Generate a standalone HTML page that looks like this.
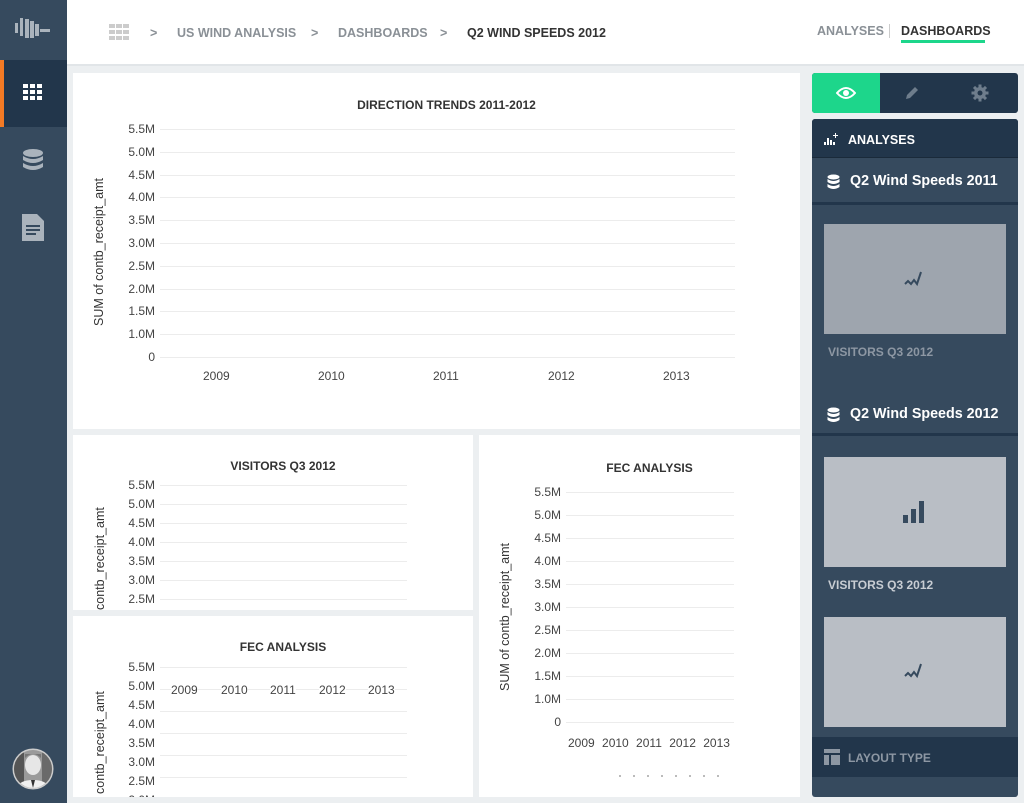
<!DOCTYPE html>
<html><head><meta charset="utf-8"><style>
*{margin:0;padding:0;box-sizing:border-box}
body{width:1024px;height:803px;overflow:hidden;background:#eceff1;font-family:"Liberation Sans",sans-serif;position:relative}
.a{position:absolute}
.side{left:0;top:0;width:67px;height:803px;background:#364a5e}
.hdr{left:67px;top:0;width:957px;height:66px;background:#fff;border-bottom:2px solid #e1e5e8}
.bc{font-size:12.5px;font-weight:bold;color:#8a9096;top:26px}
.card{background:#fff}
.t{font-size:12px;font-weight:bold;color:#333;text-align:center}
.yl{font-size:12px;color:#444;text-align:right;width:40px}
.g{height:1px;background:#ececec}
.xl{font-size:12px;color:#444}
.rot{font-size:12.5px;color:#333;transform:rotate(-90deg);transform-origin:left top;white-space:nowrap}
.rp{color:#fff;font-weight:bold}
</style></head><body>
<div class="a side"></div>
<svg class="a" style="left:14px;top:16px" width="38" height="24" viewBox="0 0 38 24" fill="#aab3bc"><rect x="1" y="7" width="3" height="10"/><rect x="6" y="2" width="3" height="18"/><rect x="11" y="3" width="4" height="19"/><rect x="16" y="5" width="4" height="17"/><rect x="21" y="8" width="4" height="12"/><rect x="26" y="13" width="10" height="3"/></svg>
<div class="a" style="left:0;top:60px;width:67px;height:67px;background:#22364b"></div>
<div class="a" style="left:0;top:60px;width:4px;height:67px;background:#f37a25"></div>
<svg class="a" style="left:23px;top:84px" width="20" height="16" fill="#fff"><rect x="0" y="0" width="5" height="4"/><rect x="7" y="0" width="5" height="4"/><rect x="14" y="0" width="5" height="4"/><rect x="0" y="6" width="5" height="4"/><rect x="7" y="6" width="5" height="4"/><rect x="14" y="6" width="5" height="4"/><rect x="0" y="12" width="5" height="4"/><rect x="7" y="12" width="5" height="4"/><rect x="14" y="12" width="5" height="4"/></svg>
<svg class="a" style="left:22px;top:149px" width="22" height="24" fill="#aab3bc"><ellipse cx="11" cy="4" rx="10" ry="4"/><path d="M1 7q10 6 20 0v4q-10 6-20 0z"/><path d="M1 14q10 6 20 0v4q-10 6-20 0z"/></svg>
<svg class="a" style="left:22px;top:214px" width="22" height="27"><path d="M0 0h15l7 7v20h-22z" fill="#aab3bc"/><rect x="4" y="11" width="14" height="2" fill="#364a5e"/><rect x="4" y="15" width="14" height="2" fill="#364a5e"/><rect x="4" y="19" width="10" height="2" fill="#364a5e"/></svg>
<svg class="a" style="left:12px;top:748px" width="42" height="42"><defs><clipPath id="c"><circle cx="21" cy="21" r="19"/></clipPath></defs><circle cx="21" cy="21" r="20.5" fill="#ccc"/><g clip-path="url(#c)"><rect width="42" height="42" fill="#9a9a9a"/><rect x="0" y="0" width="12" height="42" fill="#555"/><rect x="30" y="0" width="12" height="42" fill="#6a6a6a"/><ellipse cx="21" cy="17" rx="8" ry="10" fill="#e6e6e6"/><path d="M13 10q8-8 16 0v-4h-16z" fill="#777"/><path d="M4 42q2-10 17-10t17 10z" fill="#f0f0f0"/><path d="M19 32l2 8 2-8z" fill="#333"/></g></svg>

<div class="a hdr"></div>
<svg class="a" style="left:109px;top:24px" width="21" height="16" fill="#ccc"><rect x="0" y="0" width="6" height="4"/><rect x="7" y="0" width="6" height="4"/><rect x="14" y="0" width="6" height="4"/><rect x="0" y="6" width="6" height="4"/><rect x="7" y="6" width="6" height="4"/><rect x="14" y="6" width="6" height="4"/><rect x="0" y="12" width="6" height="4"/><rect x="7" y="12" width="6" height="4"/><rect x="14" y="12" width="6" height="4"/></svg>
<div class="a bc" style="left:150px">&gt;</div>
<div class="a bc" style="left:177px">US WIND ANALYSIS</div>
<div class="a bc" style="left:311px">&gt;</div>
<div class="a bc" style="left:338px">DASHBOARDS</div>
<div class="a bc" style="left:440px">&gt;</div>
<div class="a bc" style="left:467px;color:#333">Q2 WIND SPEEDS 2012</div>
<div class="a bc" style="left:817px;top:24px">ANALYSES</div>
<div class="a" style="left:889px;top:24px;width:1px;height:14px;background:#ccc"></div>
<div class="a bc" style="left:901px;top:24px;color:#333">DASHBOARDS</div>
<div class="a" style="left:901px;top:40px;width:84px;height:3px;background:#1dd68b"></div>

<!-- main chart -->
<div class="a card" style="left:73px;top:73px;width:727px;height:356px"></div>
<div class="a t" style="left:73px;top:98px;width:747px">DIRECTION TRENDS 2011-2012</div>
<div class="a rot" style="left:92px;top:326px">SUM of contb_receipt_amt</div>
<div class="a" style="left:115px;top:122px">
<div class="a yl" style="top:0">5.5M</div><div class="a yl" style="top:23px">5.0M</div><div class="a yl" style="top:46px">4.5M</div><div class="a yl" style="top:68px">4.0M</div><div class="a yl" style="top:91px">3.5M</div><div class="a yl" style="top:114px">3.0M</div><div class="a yl" style="top:137px">2.5M</div><div class="a yl" style="top:160px">2.0M</div><div class="a yl" style="top:182px">1.5M</div><div class="a yl" style="top:205px">1.0M</div><div class="a yl" style="top:228px">0</div>
</div>
<div class="a" style="left:160px;top:129px">
<div class="a g" style="top:0;width:575px"></div><div class="a g" style="top:23px;width:575px"></div><div class="a g" style="top:46px;width:575px"></div><div class="a g" style="top:68px;width:575px"></div><div class="a g" style="top:91px;width:575px"></div><div class="a g" style="top:114px;width:575px"></div><div class="a g" style="top:137px;width:575px"></div><div class="a g" style="top:160px;width:575px"></div><div class="a g" style="top:182px;width:575px"></div><div class="a g" style="top:205px;width:575px"></div><div class="a g" style="top:228px;width:575px"></div>
</div>
<div class="a xl" style="left:203px;top:369px">2009</div><div class="a xl" style="left:318px;top:369px">2010</div><div class="a xl" style="left:433px;top:369px">2011</div><div class="a xl" style="left:548px;top:369px">2012</div><div class="a xl" style="left:663px;top:369px">2013</div>

<!-- panel 2 -->
<div class="a card" style="left:73px;top:435px;width:400px;height:175px;overflow:hidden">
<div class="a t" style="left:0;top:24px;width:420px">VISITORS Q3 2012</div>
<div class="a rot" style="left:20px;top:175px">contb_receipt_amt</div>
<div class="a yl" style="left:42px;top:43px">5.5M</div><div class="a yl" style="left:42px;top:62px">5.0M</div><div class="a yl" style="left:42px;top:81px">4.5M</div><div class="a yl" style="left:42px;top:100px">4.0M</div><div class="a yl" style="left:42px;top:119px">3.5M</div><div class="a yl" style="left:42px;top:138px">3.0M</div><div class="a yl" style="left:42px;top:157px">2.5M</div>
<div class="a g" style="left:87px;top:50px;width:247px"></div><div class="a g" style="left:87px;top:69px;width:247px"></div><div class="a g" style="left:87px;top:88px;width:247px"></div><div class="a g" style="left:87px;top:107px;width:247px"></div><div class="a g" style="left:87px;top:126px;width:247px"></div><div class="a g" style="left:87px;top:145px;width:247px"></div><div class="a g" style="left:87px;top:164px;width:247px"></div>
</div>

<!-- panel 3 -->
<div class="a card" style="left:73px;top:616px;width:400px;height:181px;overflow:hidden">
<div class="a t" style="left:0;top:24px;width:420px">FEC ANALYSIS</div>
<div class="a rot" style="left:20px;top:178px">contb_receipt_amt</div>
<div class="a yl" style="left:42px;top:44px">5.5M</div><div class="a yl" style="left:42px;top:63px">5.0M</div><div class="a yl" style="left:42px;top:82px">4.5M</div><div class="a yl" style="left:42px;top:101px">4.0M</div><div class="a yl" style="left:42px;top:120px">3.5M</div><div class="a yl" style="left:42px;top:139px">3.0M</div><div class="a yl" style="left:42px;top:158px">2.5M</div><div class="a yl" style="left:42px;top:177px">2.0M</div>
<div class="a g" style="left:87px;top:51px;width:247px"></div><div class="a g" style="left:87px;top:73px;width:247px"></div><div class="a g" style="left:87px;top:95px;width:247px"></div><div class="a g" style="left:87px;top:117px;width:247px"></div><div class="a g" style="left:87px;top:139px;width:247px"></div><div class="a g" style="left:87px;top:161px;width:247px"></div>
<div class="a xl" style="left:98px;top:67px;background:#fff">2009</div><div class="a xl" style="left:148px;top:67px;background:#fff">2010</div><div class="a xl" style="left:197px;top:67px;background:#fff">2011</div><div class="a xl" style="left:246px;top:67px;background:#fff">2012</div><div class="a xl" style="left:295px;top:67px;background:#fff">2013</div>
</div>

<!-- panel 4 -->
<div class="a card" style="left:479px;top:435px;width:321px;height:362px">
<div class="a t" style="left:0;top:26px;width:341px">FEC ANALYSIS</div>
<div class="a rot" style="left:19px;top:256px">SUM of contb_receipt_amt</div>
<div class="a" style="left:42px;top:50px">
<div class="a yl" style="top:0">5.5M</div><div class="a yl" style="top:23px">5.0M</div><div class="a yl" style="top:46px">4.5M</div><div class="a yl" style="top:69px">4.0M</div><div class="a yl" style="top:92px">3.5M</div><div class="a yl" style="top:115px">3.0M</div><div class="a yl" style="top:138px">2.5M</div><div class="a yl" style="top:161px">2.0M</div><div class="a yl" style="top:184px">1.5M</div><div class="a yl" style="top:207px">1.0M</div><div class="a yl" style="top:230px">0</div>
</div>
<div class="a" style="left:87px;top:57px">
<div class="a g" style="top:0;width:168px"></div><div class="a g" style="top:23px;width:168px"></div><div class="a g" style="top:46px;width:168px"></div><div class="a g" style="top:69px;width:168px"></div><div class="a g" style="top:92px;width:168px"></div><div class="a g" style="top:115px;width:168px"></div><div class="a g" style="top:138px;width:168px"></div><div class="a g" style="top:161px;width:168px"></div><div class="a g" style="top:184px;width:168px"></div><div class="a g" style="top:207px;width:168px"></div><div class="a g" style="top:230px;width:168px"></div>
</div>
<div class="a xl" style="left:89px;top:301px;word-spacing:4px;white-space:nowrap">2009 2010 2011 2012 2013</div>
<div class="a" style="left:140px;top:340px;width:110px;height:2px;background:repeating-linear-gradient(90deg,#bbb 0 2px,transparent 2px 14px)"></div>
</div>

<!-- right panel -->
<div class="a" style="left:812px;top:73px;width:206px;height:40px;background:#22364b;border-radius:3px"></div>
<div class="a" style="left:812px;top:73px;width:68px;height:40px;background:#1dd68b;border-radius:3px 0 0 3px"></div>
<svg class="a" style="left:836px;top:86px" width="20" height="14"><path d="M1 7Q10 -3 19 7Q10 17 1 7z" fill="none" stroke="#fff" stroke-width="2"/><circle cx="10" cy="7" r="3" fill="#fff"/></svg>
<svg class="a" style="left:904px;top:85px" width="16" height="16"><path d="M2 14l1-4 8-8 3 3-8 8z" fill="#6e7d8c"/></svg>
<svg class="a" style="left:971px;top:84px" width="18" height="18" viewBox="0 0 18 18"><g fill="#6e7d8c"><circle cx="9" cy="9" r="6"/><rect x="7.5" y="0.5" width="3" height="17"/><rect x="0.5" y="7.5" width="17" height="3"/><rect x="7.5" y="0.5" width="3" height="17" transform="rotate(45 9 9)"/><rect x="7.5" y="0.5" width="3" height="17" transform="rotate(-45 9 9)"/></g><circle cx="9" cy="9" r="2.5" fill="#22364b"/></svg>
<div class="a" style="left:812px;top:119px;width:206px;height:678px;background:#364a5e;border-radius:3px"></div>
<div class="a" style="left:812px;top:119px;width:206px;height:39px;background:#22364b;border-radius:3px 3px 0 0;border-bottom:1px solid #1a2a3a"></div>
<svg class="a" style="left:823px;top:133px" width="16" height="13" fill="#fff"><rect x="1" y="9" width="2" height="3"/><rect x="4" y="5" width="2" height="7"/><rect x="7" y="7" width="2" height="5"/><rect x="10" y="9" width="2" height="3"/><rect x="12" y="0" width="1" height="5"/><rect x="10" y="2" width="5" height="1"/></svg>
<div class="a rp" style="left:848px;top:133px;font-size:12.5px">ANALYSES</div>
<div class="a" style="left:812px;top:202px;width:206px;height:3px;background:#22364b"></div>
<svg class="a" style="left:827px;top:174px" width="13" height="15" fill="#fff"><ellipse cx="6.5" cy="3" rx="6" ry="2.5"/><path d="M.5 5q6 4 12 0v3q-6 4-12 0z"/><path d="M.5 10q6 4 12 0v3q-6 4-12 0z"/></svg>
<div class="a rp" style="left:850px;top:173px;font-size:14.3px">Q2 Wind Speeds 2011</div>
<div class="a" style="left:824px;top:224px;width:182px;height:110px;background:#9ea5ae"></div>
<svg class="a" style="left:904px;top:270px" width="22" height="18"><path d="M1 14l3-3 3 3 3-4 3 4 4-12" fill="none" stroke="#364a5e" stroke-width="2"/></svg>
<div class="a" style="left:828px;top:345px;font-size:12px;font-weight:bold;color:#8d97a3">VISITORS Q3 2012</div>
<div class="a" style="left:812px;top:433px;width:206px;height:3px;background:#22364b"></div>
<svg class="a" style="left:827px;top:407px" width="13" height="15" fill="#fff"><ellipse cx="6.5" cy="3" rx="6" ry="2.5"/><path d="M.5 5q6 4 12 0v3q-6 4-12 0z"/><path d="M.5 10q6 4 12 0v3q-6 4-12 0z"/></svg>
<div class="a rp" style="left:850px;top:406px;font-size:14.3px">Q2 Wind Speeds 2012</div>
<div class="a" style="left:824px;top:457px;width:182px;height:110px;background:#b9bec5"></div>
<svg class="a" style="left:903px;top:500px" width="24" height="24" fill="#364a5e"><rect x="0" y="15" width="5" height="8"/><rect x="8" y="9" width="5" height="14"/><rect x="16" y="1" width="5" height="22"/></svg>
<div class="a" style="left:828px;top:578px;font-size:12px;font-weight:bold;color:#c8cdd3">VISITORS Q3 2012</div>
<div class="a" style="left:824px;top:617px;width:182px;height:110px;background:#b9bec5"></div>
<svg class="a" style="left:904px;top:662px" width="22" height="18"><path d="M1 14l3-3 3 3 3-4 3 4 4-12" fill="none" stroke="#364a5e" stroke-width="2"/></svg>
<div class="a" style="left:812px;top:737px;width:206px;height:40px;background:#22364b"></div>
<svg class="a" style="left:824px;top:749px" width="16" height="16" fill="#8d97a3"><rect x="0" y="0" width="16" height="4"/><rect x="0" y="6" width="5" height="10"/><rect x="7" y="6" width="9" height="10"/></svg>
<div class="a" style="left:848px;top:751px;font-size:12px;font-weight:bold;color:#8d97a3">LAYOUT TYPE</div>
</body></html>
